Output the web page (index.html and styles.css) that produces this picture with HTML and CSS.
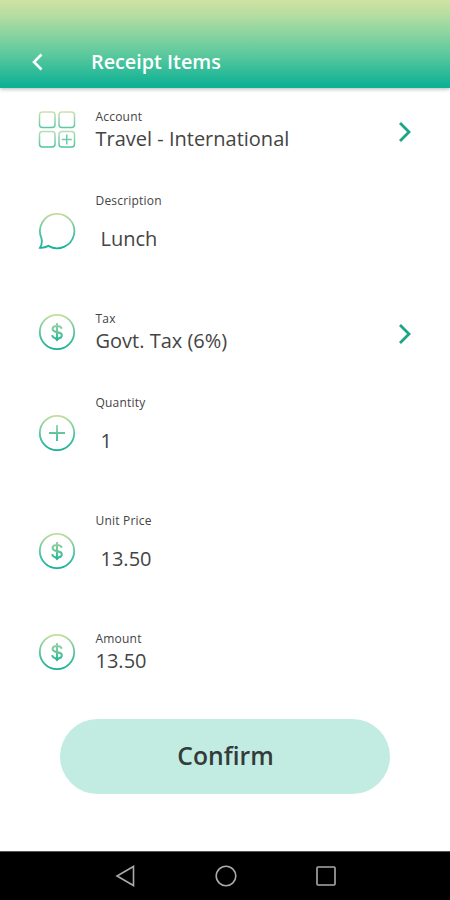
FILE: index.html
```html
<!DOCTYPE html>
<html lang="en">
<head>
  <meta charset="UTF-8">
  <title>Receipt Items</title>
  <link rel="stylesheet" href="styles.css">
</head>
<body>
  <!-- shared icon shapes -->
  <svg class="defs" width="0" height="0">
    <defs>
      <linearGradient id="fade" gradientUnits="userSpaceOnUse" x1="0" y1="0" x2="0" y2="38">
        <stop offset="0" stop-color="#cfe0a0"/>
        <stop offset="0.5" stop-color="#5cc6a0"/>
        <stop offset="1" stop-color="#0fb096"/>
      </linearGradient>
      <linearGradient id="fade-small" gradientUnits="userSpaceOnUse" x1="0" y1="9" x2="0" y2="29">
        <stop offset="0" stop-color="#a5d6a0"/>
        <stop offset="1" stop-color="#1fb497"/>
      </linearGradient>
      <linearGradient id="fade-top" gradientUnits="userSpaceOnUse" x1="0" y1="0" x2="0" y2="18">
        <stop offset="0" stop-color="#cfe3b4"/>
        <stop offset="1" stop-color="#55c5a6"/>
      </linearGradient>
      <linearGradient id="fade-bottom" gradientUnits="userSpaceOnUse" x1="0" y1="20" x2="0" y2="38">
        <stop offset="0" stop-color="#b9dfb4"/>
        <stop offset="1" stop-color="#45c0a2"/>
      </linearGradient>
      <symbol id="dollar" viewBox="0 0 38 38">
        <circle cx="19" cy="19" r="17.2" stroke="url(#fade)" stroke-width="1.8"/>
        <path d="M23.600 15.800C23.200 13.800 21.300 13 19 13c-2.600 0-4.400 1.200-4.400 3 0 4.200 9.200 2 9.200 6.200 0 2-2 3.200-4.700 3.200-2.600 0-4.600-1-4.900-3.200M19 10v17" stroke="url(#fade-small)" stroke-width="2.100"/>
        <path d="M16.800 26h4.400L19 28.600z" fill="#25b698"/>
      </symbol>
    </defs>
  </svg>

  <header class="header">
    <svg class="back" width="14" height="20" viewBox="0 0 14 20"><path d="M11.500 2.500 4 10l7.500 7.500"/></svg>
    <h1 class="title">Receipt Items</h1>
  </header>

  <main class="items">
    <div class="row">
      <svg class="icon" viewBox="0 0 38 38">
        <g stroke-width="1.5">
          <rect x="1.500" y="1" width="15.500" height="15.500" rx="3" stroke="url(#fade-top)"/>
          <rect x="21" y="1" width="15.500" height="15.500" rx="3" stroke="url(#fade-top)"/>
          <rect x="1.500" y="20.500" width="15.500" height="15.500" rx="3" stroke="url(#fade-bottom)"/>
          <rect x="21" y="20.500" width="15.500" height="15.500" rx="3" stroke="url(#fade-bottom)"/>
          <path d="M28.750 23.500v10M23.750 28.500h10" stroke="#6ccbab"/>
        </g>
      </svg>
      <div class="field">
        <div class="label">Account</div>
        <div class="value">Travel - International</div>
      </div>
      <svg class="chevron" width="14" height="22" viewBox="0 0 14 22"><path d="M2 2l9 9-9 9"/></svg>
    </div>

    <div class="row row-input">
      <svg class="icon" viewBox="0 0 38 38">
        <path d="M3.300 25.800A17.200 17.200 0 1 1 10.400 33.900C8 35.300 5 36 2 35.800 3.900 33 4.300 29.500 3.300 25.800z" stroke="url(#fade)" stroke-width="1.8"/>
      </svg>
      <div class="field">
        <div class="label">Description</div>
        <div class="value">Lunch</div>
      </div>
    </div>

    <div class="row">
      <svg class="icon"><use href="#dollar"/></svg>
      <div class="field">
        <div class="label">Tax</div>
        <div class="value">Govt. Tax (6%)</div>
      </div>
      <svg class="chevron" width="14" height="22" viewBox="0 0 14 22"><path d="M2 2l9 9-9 9"/></svg>
    </div>

    <div class="row row-input">
      <svg class="icon" viewBox="0 0 38 38">
        <circle cx="19" cy="19" r="17.200" stroke="url(#fade)" stroke-width="1.8"/>
        <path d="M19 11v16M11 19h16" stroke="url(#fade-small)" stroke-width="1.8"/>
      </svg>
      <div class="field">
        <div class="label">Quantity</div>
        <div class="value">1</div>
      </div>
    </div>

    <div class="row row-input">
      <svg class="icon"><use href="#dollar"/></svg>
      <div class="field">
        <div class="label">Unit Price</div>
        <div class="value">13.50</div>
      </div>
    </div>

    <div class="row">
      <svg class="icon"><use href="#dollar"/></svg>
      <div class="field">
        <div class="label">Amount</div>
        <div class="value">13.50</div>
      </div>
    </div>

    <button class="confirm">Confirm</button>
  </main>

  <nav class="navbar">
    <svg width="24" height="24" viewBox="0 0 24 24"><path d="M19.500 2.500v19L3 12z"/></svg>
    <svg width="24" height="24" viewBox="0 0 24 24"><circle cx="12" cy="12" r="9.800"/></svg>
    <svg width="24" height="24" viewBox="0 0 24 24"><rect x="3" y="3" width="18" height="18" rx="1"/></svg>
  </nav>
</body>
</html>
```

FILE: styles.css
```css
* {
  box-sizing: border-box;
}
body {
  margin: 0;
  height: 900px;
  display: flex;
  flex-direction: column;
  font-family: "Open Sans", "Noto Sans", sans-serif;
  color: #444;
  background-color: #fff;
}
svg {
  fill: none;
  flex-shrink: 0;
}
.defs {
  position: absolute;
}

/* header */
.header {
  height: 88px;
  padding: 0 30px 15px;
  display: flex;
  align-items: flex-end;
  background: linear-gradient(#cfe2a3 0%, #b9dea1 15%, #5bc99d 62%, #0fb195 97%);
  box-shadow: 0 1px 4px rgba(0, 0, 0, 0.3);
}
.back {
  margin-bottom: 1px;
  stroke: #fff;
  stroke-width: 2.6;
}
.title {
  margin: 0 0 0 47px;
  font-size: 19.8px;
  line-height: 22px;
  font-weight: 600;
  color: #fff;
}

/* form rows */
.items {
  flex: 1;
  display: flex;
  flex-direction: column;
}
.row {
  height: 84px;
  padding: 0 38px;
  display: flex;
  align-items: center;
}
.row-input {
  height: 118px;
}
.icon {
  width: 38px;
  height: 38px;
}
.field {
  flex: 1;
  margin-left: 19.5px;
}
.label {
  font-size: 12px;
  line-height: 18px;
  letter-spacing: 0.2px;
}
.value {
  font-size: 20px;
  line-height: 26px;
  white-space: nowrap;
}
.row-input .value {
  padding: 0 0 4px 5px;
  line-height: 57px;
}
.chevron {
  margin-top: 3px;
  stroke: #1aa586;
  stroke-width: 2.8;
}

.confirm {
  width: 330px;
  height: 75px;
  margin: 25px auto 0;
  padding: 0 0 2px 1px;
  border: none;
  border-radius: 38px;
  background-color: #c2ece2;
  color: #333c3b;
  font-family: inherit;
  font-size: 24.7px;
  font-weight: 600;
}

/* android navigation */
.navbar {
  height: 49px;
  padding: 0 112px 0 114px;
  display: flex;
  align-items: center;
  justify-content: space-between;
  background-color: #000;
  border-top: 1px solid #555;
}
.navbar svg {
  margin-bottom: 1px;
  stroke: #aaa;
  stroke-width: 1.6;
}
```
